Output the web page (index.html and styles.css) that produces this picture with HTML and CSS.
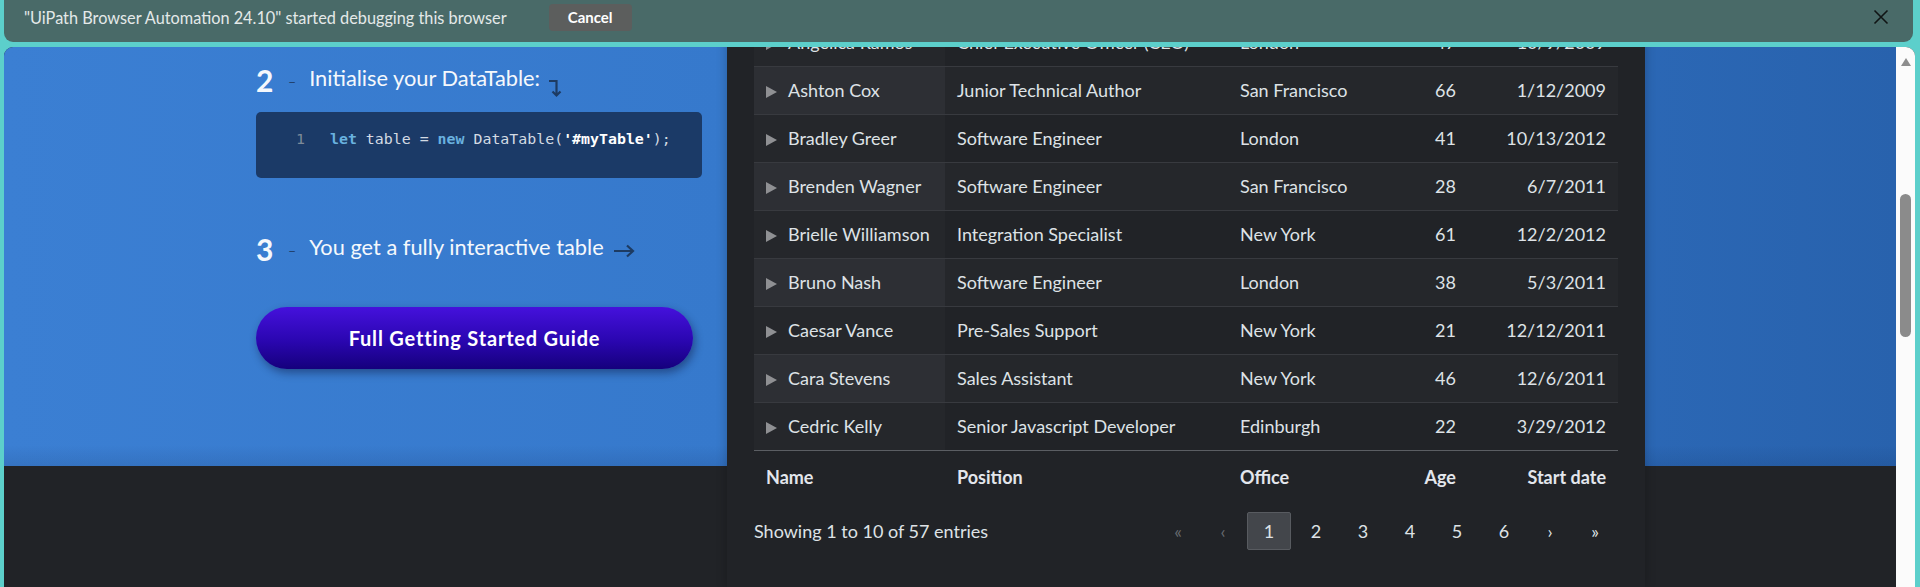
FILE: index.html
```html
<!DOCTYPE html>
<html lang="en">
<head>
<meta charset="utf-8">
<title>DataTables</title>
<link rel="stylesheet" href="styles.css">
</head>
<body>
<div class="frame">
  <div class="infobar">
    <span class="infobar-text">"UiPath Browser Automation 24.10" started debugging this browser</span>
    <button class="infobar-cancel" type="button">Cancel</button>
    <span class="infobar-spacer"></span>
    <svg class="infobar-close" viewBox="0 0 16 16" aria-label="Close"><path d="M1.5 1.5 L14.5 14.5 M14.5 1.5 L1.5 14.5" /></svg>
  </div>
  <div class="viewport">
    <div class="page">
      <section class="hero">
        <div class="steps">
          <div class="step step-init">
            <span class="step-num">2</span>
            <span class="step-dash">–</span>
            <span class="step-text">Initialise your DataTable:</span>
            <svg class="step-arrow-down" viewBox="0 0 16 20"><path d="M2 3 H9.5 V17.5 M5.5 13.5 L9.5 17.5 L13.5 13.5" /></svg>
          </div>
          <div class="code"><span class="ln">1</span><code><span class="kw">let</span> table = <span class="kw">new</span> DataTable(<span class="str">'#myTable'</span>);</code></div>
          <div class="step step-result">
            <span class="step-num">3</span>
            <span class="step-dash">–</span>
            <span class="step-text">You get a fully interactive table</span>
            <svg class="step-arrow-right" viewBox="0 0 22 14"><path d="M1 7 H20 M14 1.5 L20 7 L14 12.5" /></svg>
          </div>
          <a class="guide-btn" href="#">Full Getting Started Guide</a>
        </div>
        <div class="demo">
          <table class="dt">
            <colgroup>
              <col class="c-name"><col class="c-pos"><col class="c-office"><col class="c-age"><col class="c-date">
            </colgroup>
            <tbody>
              <tr><td class="ctrl sorted">Angelica Ramos</td><td>Chief Executive Officer (CEO)</td><td>London</td><td class="num">47</td><td class="num">10/9/2009</td></tr>
              <tr class="odd"><td class="ctrl sorted">Ashton Cox</td><td>Junior Technical Author</td><td>San Francisco</td><td class="num">66</td><td class="num">1/12/2009</td></tr>
              <tr><td class="ctrl sorted">Bradley Greer</td><td>Software Engineer</td><td>London</td><td class="num">41</td><td class="num">10/13/2012</td></tr>
              <tr class="odd"><td class="ctrl sorted">Brenden Wagner</td><td>Software Engineer</td><td>San Francisco</td><td class="num">28</td><td class="num">6/7/2011</td></tr>
              <tr><td class="ctrl sorted">Brielle Williamson</td><td>Integration Specialist</td><td>New York</td><td class="num">61</td><td class="num">12/2/2012</td></tr>
              <tr class="odd"><td class="ctrl sorted">Bruno Nash</td><td>Software Engineer</td><td>London</td><td class="num">38</td><td class="num">5/3/2011</td></tr>
              <tr><td class="ctrl sorted">Caesar Vance</td><td>Pre-Sales Support</td><td>New York</td><td class="num">21</td><td class="num">12/12/2011</td></tr>
              <tr class="odd"><td class="ctrl sorted">Cara Stevens</td><td>Sales Assistant</td><td>New York</td><td class="num">46</td><td class="num">12/6/2011</td></tr>
              <tr class="last"><td class="ctrl sorted">Cedric Kelly</td><td>Senior Javascript Developer</td><td>Edinburgh</td><td class="num">22</td><td class="num">3/29/2012</td></tr>
            </tbody>
            <tfoot>
              <tr><th>Name</th><th>Position</th><th>Office</th><th class="num">Age</th><th class="num">Start date</th></tr>
            </tfoot>
          </table>
          <div class="dt-bottom">
            <div class="dt-info">Showing 1 to 10 of 57 entries</div>
            <nav class="dt-paging">
              <span class="pg pg-arrow disabled">«</span>
              <span class="pg pg-arrow disabled">‹</span>
              <span class="pg current">1</span>
              <span class="pg">2</span>
              <span class="pg">3</span>
              <span class="pg">4</span>
              <span class="pg">5</span>
              <span class="pg">6</span>
              <span class="pg pg-arrow">›</span>
              <span class="pg pg-arrow">»</span>
            </nav>
          </div>
        </div>
      </section>
      <section class="below"></section>
    </div>
    <div class="scrollbar">
      <span class="sb-up"></span>
      <span class="sb-thumb"></span>
    </div>
  </div>
</div>
</body>
</html>
```

FILE: styles.css
```css
* { box-sizing: border-box; }

html, body {
  margin: 0;
  padding: 0;
  width: 1920px;
  height: 587px;
  overflow: hidden;
}

body {
  background: #5ccfcb;
  font-family: Lato, "Open Sans", "Liberation Sans", sans-serif;
}

.frame {
  width: 1920px;
  height: 587px;
  display: flex;
  flex-direction: column;
  background: #5ccfcb;
}

/* ---------- debugging infobar ---------- */
.infobar {
  flex: none;
  height: 42px;
  margin: 0 7px 5px 4px;
  padding: 0 24px 8px 20px;
  background: #496a68;
  border-radius: 0 0 9px 9px;
  display: flex;
  align-items: center;
  color: #e4e9e8;
  font-size: 16.3px;
}

.infobar-cancel {
  margin-left: 42px;
  width: 83px;
  height: 27px;
  border: none;
  border-radius: 4px;
  background: #5c5e5d;
  color: #ffffff;
  font-family: Lato, "Open Sans", sans-serif;
  font-size: 15px;
  font-weight: 700;
  padding: 0;
}

.infobar-spacer { flex: 1; }

.infobar-close {
  width: 16px;
  height: 16px;
  fill: none;
  stroke: #101414;
  stroke-width: 1.6;
}

/* ---------- browser viewport ---------- */
.viewport {
  flex: 1;
  min-height: 0;
  margin: 0 5px 0 4px;
  border-radius: 9px 9px 0 0;
  overflow: hidden;
  display: flex;
  background: #212327;
}

.page {
  flex: 1;
  min-width: 0;
  display: flex;
  flex-direction: column;
}

.hero {
  flex: none;
  height: 419px;
  display: flex;
  align-items: flex-start;
  padding-left: 252px;
  background:
    linear-gradient(180deg, rgba(0,0,0,0) 95%, rgba(10,30,70,0.12) 100%),
    linear-gradient(90deg, #3b7fd3 0%, #3679cc 38%, #2f6ebf 70%, #2862ad 100%);
}

.below {
  flex: 1;
  background: #212327;
}

/* ---------- left column: steps ---------- */
.steps {
  flex: none;
  width: 471px;
  padding-top: 13px;
  display: flex;
  flex-direction: column;
  align-items: flex-start;
}

.step {
  display: flex;
  align-items: center;
  height: 40px;
  line-height: 40px;
  color: #f5f8fc;
}

.step-num {
  font-size: 30px;
  font-weight: 700;
  width: 18px;
}

.step-dash {
  font-size: 14px;
  color: #1f3f69;
  margin: 4px 13px 0 14px;
}

.step-text {
  font-size: 21.8px;
  margin-bottom: 4px;
}

.step-arrow-down {
  width: 16px;
  height: 20px;
  margin-left: 7px;
  margin-top: 15px;
  fill: none;
  stroke: #1d3b62;
  stroke-width: 2.2;
}

.step-arrow-right {
  width: 22px;
  height: 14px;
  margin-left: 9px;
  margin-top: 4px;
  fill: none;
  stroke: #1d3b62;
  stroke-width: 2.2;
}

.code {
  margin-top: 12px;
  width: 446px;
  height: 66px;
  padding: 16px 0 0 32px;
  background: #1b3a67;
  border-radius: 5px;
  display: flex;
  align-items: baseline;
  font-family: "DejaVu Sans Mono", "Liberation Mono", monospace;
  font-size: 14.9px;
  line-height: 22px;
  color: #d3dae3;
  white-space: pre;
}

.code .ln {
  width: 17px;
  text-align: right;
  color: #7d8a99;
  margin-right: 25px;
}

.code code {
  font-family: inherit;
}

.code .kw {
  color: #69b1df;
  font-weight: 700;
}

.code .str {
  color: #ffffff;
  font-weight: 700;
}

.step-result {
  margin-top: 51px;
}

.guide-btn {
  margin-top: 38px;
  width: 437px;
  height: 62px;
  border-radius: 31px;
  display: flex;
  align-items: center;
  justify-content: center;
  background: linear-gradient(180deg, #4511dc 0%, #2a06b0 55%, #15007c 100%);
  box-shadow: 2px 4px 8px rgba(10, 20, 60, 0.45);
  color: #ffffff;
  text-decoration: none;
  font-size: 20px;
  font-weight: 700;
  letter-spacing: 0.8px;
}

/* ---------- right column: demo table ---------- */
.demo {
  flex: none;
  position: relative;
  z-index: 1;
  width: 918px;
  height: 568px;
  margin-top: -28px;
  padding: 0 27px;
  background: #212327;
  box-shadow: 0 0 10px rgba(0, 0, 0, 0.25);
  color: #dee2e6;
  font-size: 18px;
}

.dt {
  width: 864px;
  table-layout: fixed;
  border-collapse: separate;
  border-spacing: 0;
}

.c-name { width: 191px; }
.c-pos { width: 283px; }
.c-office { width: 152px; }
.c-age { width: 88px; }
.c-date { width: 150px; }

.dt td {
  height: 48px;
  padding: 0 12px 1px;
  border-bottom: 1px solid #383a3f;
  white-space: nowrap;
  overflow: hidden;
  vertical-align: middle;
  line-height: 24px;
}

.dt tr.odd td { background: #25272b; }
.dt td.sorted { background: #25272b; }
.dt tr.odd td.sorted { background: #2d2f34; }

.dt tr.last td { border-bottom-color: #5b5e63; }

.dt .ctrl::before {
  content: "";
  display: inline-block;
  border-left: 11px solid #8f9093;
  border-top: 6px solid transparent;
  border-bottom: 6px solid transparent;
  margin-right: 11px;
  vertical-align: -1px;
}

.dt .num { text-align: right; }

.dt tfoot th {
  padding: 14px 12px 8px;
  text-align: left;
  font-weight: 700;
  color: #e3e6ec;
  line-height: 25px;
}

.dt tfoot th.num { text-align: right; }

.dt-bottom {
  margin-top: 14px;
  display: flex;
  align-items: center;
  justify-content: space-between;
  padding-right: 2px;
}

.dt-paging {
  display: flex;
  gap: 3px;
}

.pg {
  width: 44px;
  height: 38px;
  display: flex;
  align-items: center;
  justify-content: center;
  border: 1px solid transparent;
  border-radius: 2px;
  color: #dee2e6;
  font-size: 18px;
}

.pg-arrow { width: 42px; }

.pg.disabled { color: #686b70; }

.pg.current {
  background: #43464b;
  border-color: #585b60;
}

/* ---------- scrollbar ---------- */
.scrollbar {
  flex: none;
  width: 19px;
  background: #fbfbfb;
  display: flex;
  flex-direction: column;
  align-items: center;
  padding-top: 11px;
}

.sb-up {
  width: 0;
  height: 0;
  border-left: 5.5px solid transparent;
  border-right: 5.5px solid transparent;
  border-bottom: 8px solid #8d8d8d;
}

.sb-thumb {
  margin-top: 128px;
  width: 11px;
  height: 143px;
  border-radius: 6px;
  background: #8b8b8b;
}
```
